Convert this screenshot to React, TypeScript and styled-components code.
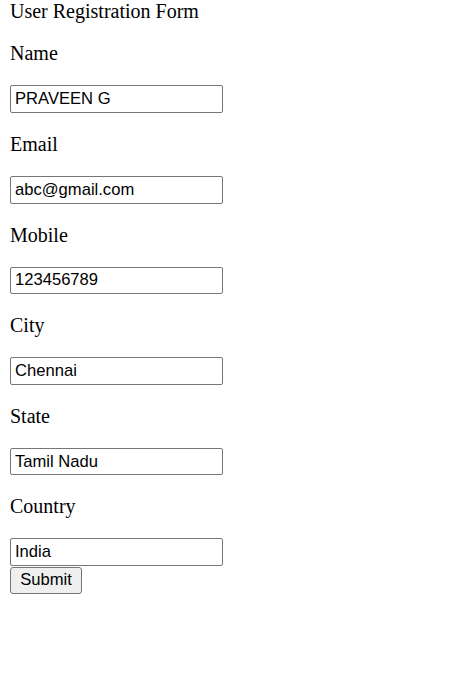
import React from 'react';
import styled, { createGlobalStyle } from 'styled-components';

const GlobalStyle = createGlobalStyle`
  html, body {
    margin: 0;
    background: #ffffff;
  }
  body {
    padding: 0 10px;
    font-family: 'Liberation Serif', 'Times New Roman', serif;
    font-size: 20px;
    color: #000000;
  }
`;

const Form = styled.form`
  display: block;
`;

const Title = styled.div`
  line-height: 22.4px;
`;

const Label = styled.p`
  margin: 20px 0 19.6px;
  line-height: 23.4px;
`;

const Input = styled.input`
  box-sizing: border-box;
  display: block;
  width: 213px;
  height: 27.6px;
  margin: 0;
  padding: 0 4px;
  border: 1px solid #767676;
  border-radius: 2px;
  font-family: 'Liberation Sans', Arial, sans-serif;
  font-size: 16.6px;
  color: #000000;
  background: #ffffff;
  outline: none;
`;

const SubmitButton = styled.button`
  box-sizing: border-box;
  display: block;
  width: 72px;
  height: 27px;
  margin: 0.6px 0 0;
  padding: 0 8px;
  border: 1px solid #767676;
  border-radius: 3px;
  background: #efefef;
  font-family: 'Liberation Sans', Arial, sans-serif;
  font-size: 16.6px;
  color: #000000;
`;

const fields = [
  { label: 'Name', value: 'PRAVEEN G' },
  { label: 'Email', value: 'abc@gmail.com' },
  { label: 'Mobile', value: '123456789' },
  { label: 'City', value: 'Chennai' },
  { label: 'State', value: 'Tamil Nadu' },
  { label: 'Country', value: 'India' },
];

export default function App() {
  return (
    <>
      <GlobalStyle />
      <Form onSubmit={(e) => e.preventDefault()}>
        <Title>User Registration Form</Title>
        {fields.map((f) => (
          <React.Fragment key={f.label}>
            <Label>{f.label}</Label>
            <Input type="text" defaultValue={f.value} />
          </React.Fragment>
        ))}
        <SubmitButton type="submit">Submit</SubmitButton>
      </Form>
    </>
  );
}
